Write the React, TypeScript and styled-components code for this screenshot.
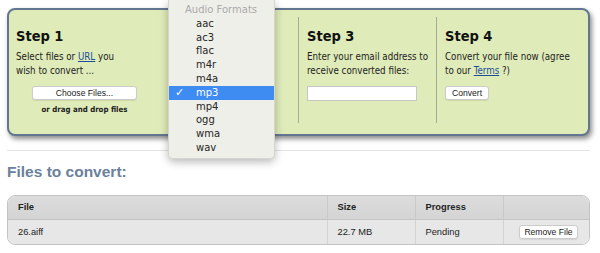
import React from "react";
import styled, { createGlobalStyle } from "styled-components";

const GlobalStyle = createGlobalStyle`
    html, body {
        margin: 0;
        background: #ffffff;
    }
    body {
        font-family: "DejaVu Sans", Verdana, sans-serif;
        color: #222222;
    }
`

const condensed = `
    font-family: "DejaVu Sans Condensed", "DejaVu Sans", Verdana, sans-serif;
    font-stretch: condensed;
`

const Page = styled.div`
    position: relative;
    width: 600px;
    box-sizing: border-box;
    padding: 8px 10px 0 7px;
`

const Panel = styled.div`
    border: 2px solid #62778f;
    border-radius: 8px;
    background: #dfebb9;
    box-shadow: 2px 3px 5px rgba(0, 0, 0, 0.45);
    padding: 7px 0 11px 0;
    display: grid;
    grid-template-columns: 160px 129px 138px 1fr;
`

const Column = styled.div<{ $first?: boolean }>`
    height: 106px;
    box-sizing: border-box;
    padding: 0 2px 0 ${p => (p.$first ? "7px" : "8px")};
    border-left: ${p => (p.$first ? "none" : "1px solid #a4ac94")};
`

const StepTitle = styled.h2`
    ${condensed}
    margin: 10px 0 5px;
    font-size: 14.5px;
    line-height: 18px;
    font-weight: bold;
    color: #111111;
`

const Text = styled.p`
    ${condensed}
    margin: 0;
    font-size: 9.7px;
    line-height: 14px;
    color: #222222;
`

const Link = styled.a`
    color: #1d4f96;
    text-decoration: underline;
`

const PlainButton = styled.button<{ $width: number }>`
    display: block;
    width: ${p => p.$width}px;
    height: 14px;
    padding: 0;
    background: #ffffff;
    border: 1px solid #cbcbcb;
    border-radius: 3px;
    box-shadow: 0 1px 1px rgba(0, 0, 0, 0.08);
    font-family: "Liberation Sans", Arial, sans-serif;
    font-size: 8.6px;
    line-height: 12px;
    color: #222222;
`

const UploadBox = styled.div`
    width: 105px;
    margin: 8px 0 0 16px;
`

const ConvertButton = styled(PlainButton)`
    margin-top: 8px;
`

const DropHint = styled.div`
    ${condensed}
    margin-top: 4px;
    text-align: center;
    font-size: 7.8px;
    line-height: 11px;
    font-weight: bold;
    white-space: nowrap;
    color: #222222;
`

const EmailInput = styled.input`
    display: block;
    margin-top: 8px;
    width: 110px;
    height: 15px;
    box-sizing: border-box;
    border: 1px solid #c6c6c6;
    background: #ffffff;
`

const FormatSelect = styled.div`
    margin-top: 67px;
    width: 90px;
    height: 14px;
    background: #ffffff;
`

const Dropdown = styled.div`
    position: absolute;
    z-index: 10;
    top: 0;
    left: 168px;
    width: 107px;
    box-sizing: border-box;
    padding: 3px 0 3px;
    background: #efefe9;
    border: 1px solid #d6d6cf;
    border-top: none;
    border-radius: 0 0 5px 5px;
    box-shadow: 0 3px 8px rgba(0, 0, 0, 0.28);
    font-family: "DejaVu Sans", sans-serif;
    font-size: 10px;
`

const GroupLabel = styled.div`
    height: 13.8px;
    line-height: 14.5px;
    padding-left: 16px;
    color: #aaaaaa;
`

const Option = styled.div<{ $selected?: boolean }>`
    position: relative;
    height: 13.8px;
    line-height: 14.5px;
    padding-left: 27px;
    color: ${p => (p.$selected ? "#ffffff" : "#262626")};
    background: ${p => (p.$selected ? "#3e8bf2" : "transparent")};
`

const Check = styled.span`
    position: absolute;
    left: 6px;
    top: 0;
    font-size: 11px;
    font-weight: bold;
`

const Rule = styled.div`
    margin-top: 14px;
    height: 1px;
    background: #e3e3e3;
`

const SectionTitle = styled.h1`
    margin: 11px 0 0;
    font-family: "Liberation Sans", Arial, sans-serif;
    font-size: 15.5px;
    line-height: 20px;
    font-weight: bold;
    color: #6b819c;
`

const TableWrap = styled.div`
    margin-top: 13px;
    border: 1px solid #c3c3c3;
    border-radius: 8px;
    overflow: hidden;
`

const Table = styled.table`
    width: 100%;
    border-collapse: collapse;
    table-layout: fixed;
    font-family: "Liberation Sans", Arial, sans-serif;
    font-size: 9.3px;
    color: #222222;
`

const HeadCell = styled.th<{ $width?: number }>`
    box-sizing: border-box;
    width: ${p => (p.$width ? `${p.$width}px` : "auto")};
    height: 23px;
    padding: 0 10px;
    text-align: left;
    font-weight: bold;
    background: linear-gradient(#dcdcdc, #d4d4d4);
    border-bottom: 1px solid #c3c3c3;
    border-left: 1px solid #c9c9c9;
    &:first-child {
        border-left: none;
    }
`

const Cell = styled.td<{ $right?: boolean }>`
    box-sizing: border-box;
    height: 25px;
    padding: 0 10px;
    background: #e7e7e7;
    text-align: ${p => (p.$right ? "right" : "left")};
    border-left: 1px solid #d3d3d3;
    &:first-child {
        border-left: none;
    }
`

const RemoveButton = styled(PlainButton)`
    display: inline-block;
    margin-right: 1px;
    vertical-align: middle;
`

const formats = ["aac", "ac3", "flac", "m4r", "m4a", "mp3", "mp4", "ogg", "wma", "wav"];

const App = () => {
    return (
        <Page>
            <GlobalStyle />
            <Panel>
                <Column $first>
                    <StepTitle>Step 1</StepTitle>
                    <Text>Select files or <Link href="#">URL</Link> you<br />wish to convert ...</Text>
                    <UploadBox>
                        <PlainButton $width={105}>Choose Files...</PlainButton>
                        <DropHint>or drag and drop files</DropHint>
                    </UploadBox>
                </Column>
                <Column>
                    {/* the open format list below covers this column */}
                    <FormatSelect />
                </Column>
                <Column>
                    <StepTitle>Step 3</StepTitle>
                    <Text>Enter your email address to<br />receive converted files:</Text>
                    <EmailInput type="text" />
                </Column>
                <Column>
                    <StepTitle>Step 4</StepTitle>
                    <Text>Convert your file now (agree<br />to our <Link href="#">Terms</Link> ?)</Text>
                    <ConvertButton $width={44}>Convert</ConvertButton>
                </Column>
            </Panel>

            <Rule />
            <SectionTitle>Files to convert:</SectionTitle>

            <TableWrap>
                <Table>
                    <thead>
                        <tr>
                            <HeadCell>File</HeadCell>
                            <HeadCell $width={88}>Size</HeadCell>
                            <HeadCell $width={88}>Progress</HeadCell>
                            <HeadCell $width={86}></HeadCell>
                        </tr>
                    </thead>
                    <tbody>
                        <tr>
                            <Cell>26.aiff</Cell>
                            <Cell>22.7 MB</Cell>
                            <Cell>Pending</Cell>
                            <Cell $right><RemoveButton $width={59}>Remove File</RemoveButton></Cell>
                        </tr>
                    </tbody>
                </Table>
            </TableWrap>

            <Dropdown>
                <GroupLabel>Audio Formats</GroupLabel>
                {formats.map(f => (
                    <Option key={f} $selected={f === "mp3"}>
                        {f === "mp3" && <Check>✓</Check>}
                        {f}
                    </Option>
                ))}
            </Dropdown>
        </Page>
    );
}

export default App;
